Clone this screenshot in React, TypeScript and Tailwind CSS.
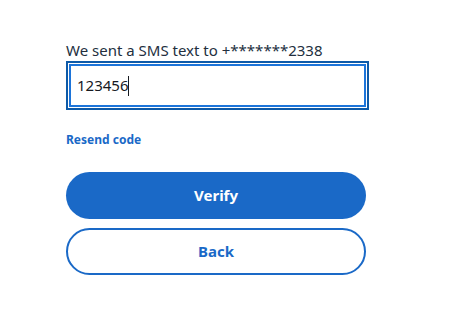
import React from "react";

export default function App() {
  return (
    <div
      className="w-[458px] h-[336px] bg-white"
      style={{ fontFamily: '"Noto Sans", "Open Sans", sans-serif' }}
    >
      <div className="flex flex-col pl-[66px] pt-[40px]">
        <label className="text-[15px] leading-[21px] text-[#232f3e]">
          We sent a SMS text to +*******2338
        </label>

        {/* code input with focus ring */}
        <div className="w-[303px] h-[49px] border-2 border-[#0d5aa8] p-[1px]">
          <div className="h-full w-full border-2 border-[#1c74d9] flex items-center pl-[6px] text-[15px] text-[#16191f]">
            <span>123456</span>
            <span className="w-px h-[20px] bg-[#16191f]" />
          </div>
        </div>

        <a className="mt-[22px] text-[12px] leading-[16px] font-bold text-[#1a69c7] cursor-pointer">
          Resend code
        </a>

        <div className="mt-[24px] flex flex-col gap-[9px] w-[300px]">
          <button className="h-[47px] rounded-full bg-[#1a69c7] text-white text-[15px] font-bold">
            Verify
          </button>
          <button className="h-[47px] rounded-full border-2 border-[#1a69c7] bg-white text-[#1a69c7] text-[15px] font-bold">
            Back
          </button>
        </div>
      </div>
    </div>
  );
}
